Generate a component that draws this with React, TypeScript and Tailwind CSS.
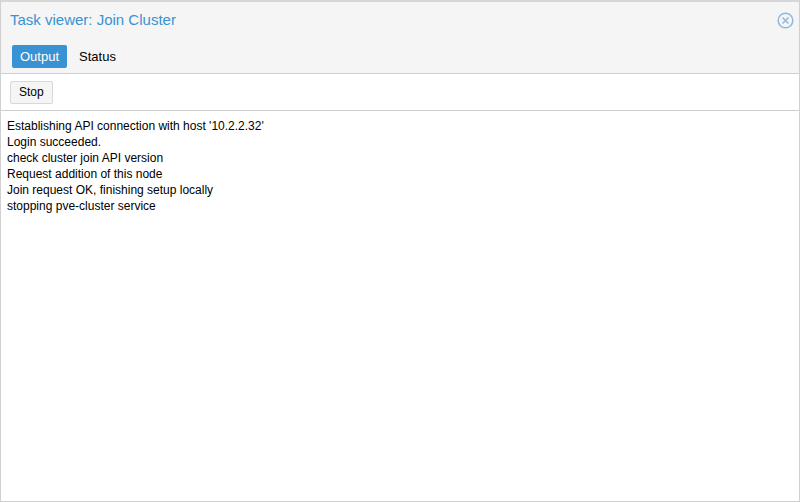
export default function App() {
  const lines = [
    "Establishing API connection with host '10.2.2.32'",
    "Login succeeded.",
    "check cluster join API version",
    "Request addition of this node",
    "Join request OK, finishing setup locally",
    "stopping pve-cluster service",
  ];
  return (
    <div className="w-[800px] h-[502px] flex flex-col bg-white border border-[#d0d0d0] border-t-2 border-t-[#d6d6d6] text-black" style={{ fontFamily: '"Liberation Sans", Arial, sans-serif' }}>
      <div className="bg-[#f5f5f5] border-b border-[#cfcfcf] h-[72px] flex flex-col">
        <div className="flex items-center justify-between pl-[9px] pr-[5px] h-[36px]">
          <span className="text-[15px] text-[#3892d4]">Task viewer: Join Cluster</span>
          <svg width="17" height="17" viewBox="0 0 17 17" fill="none" stroke="#8fb8dc" strokeWidth="1.5">
            <circle cx="8.5" cy="8.5" r="7.3" />
            <path d="M5.5 5.5l6 6M11.5 5.5l-6 6" />
          </svg>
        </div>
        <div className="flex items-center gap-[4px] pl-[11px] mt-[7px]">
          <span className="bg-[#3892d4] text-white text-[13px] px-[8px] h-[23px] flex items-center rounded-[2px]">Output</span>
          <span className="text-[13px] px-[8px] h-[23px] flex items-center">Status</span>
        </div>
      </div>
      <div className="h-[37px] flex items-center pl-[9px] border-b border-[#cfcfcf]">
        <span className="border border-[#d8d8d8] bg-[#f5f5f5] rounded-[2px] text-[12px] px-[8px] h-[23px] flex items-center">Stop</span>
      </div>
      <div className="px-[6px] pt-[7px] text-[12px] leading-[16px]">
        {lines.map((l) => (
          <div key={l}>{l}</div>
        ))}
      </div>
    </div>
  );
}
